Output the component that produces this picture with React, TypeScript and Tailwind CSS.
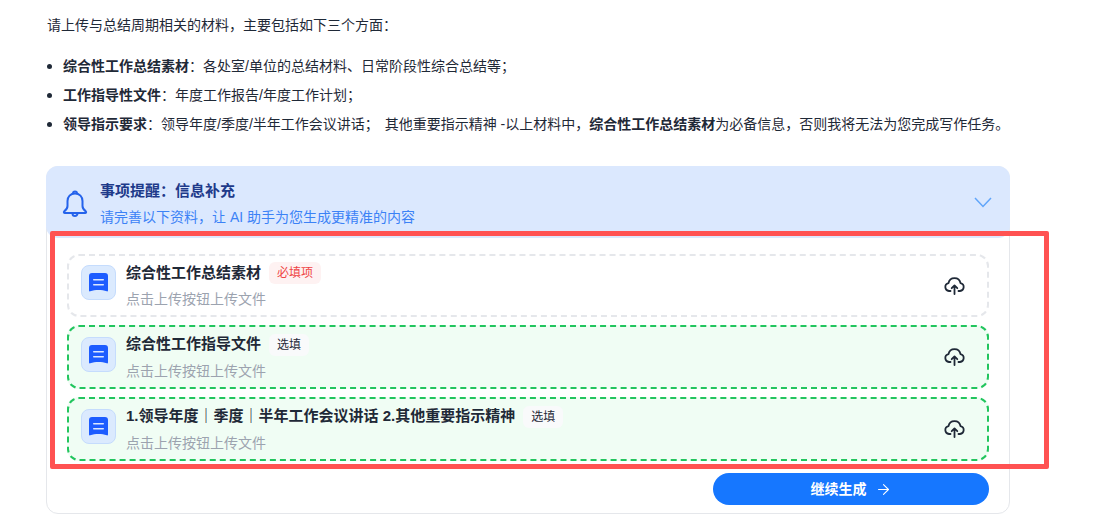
import { ArrowRight } from 'lucide-react'

const FONT = "font-['Liberation_Sans','Noto_Sans_CJK_SC',sans-serif]"

const BellIcon = () => (
  <svg width="26" height="30" viewBox="0 0 26 30" fill="none" stroke="#2563eb" strokeWidth="2" strokeLinejoin="round" className="shrink-0">
    <path d="M13 4.500c-4.500 0-7.500 3.200-7.500 7.500v5c0 2.500-1.500 4-3.300 5.400-.7.600-.3 1.600.6 1.600h20.400c.9 0 1.300-1 .6-1.600-1.800-1.400-3.300-2.900-3.300-5.400v-5c0-4.300-3-7.500-7.500-7.500z" />
    <path d="M11 4.500a2 2 0 1 1 4 0" />
    <path d="M10.500 24.500a2.500 2.500 0 0 0 5 0" />
  </svg>
)

const Chevron = () => (
  <svg width="18" height="11" viewBox="0 0 18 11" fill="none" stroke="#60a5fa" strokeWidth="1.500" className="shrink-0 mb-[4px]">
    <path d="M1 1l8 8.500L17 1" />
  </svg>
)

const DocIcon = () => (
  <div className="flex items-center justify-center w-[35px] h-[35px] mb-[6px] rounded-lg bg-[#dbeafe] border border-[#c5dcfd] shrink-0">
    <svg width="19" height="19" viewBox="0 0 19 19">
      <path d="M3 0h13a3 3 0 0 1 3 3v14.500c0 .7-.6 1.100-1.200.8-2.500-.9-5.300-1.300-8.300-1.300s-5.800.4-8.300 1.300C.6 18.600 0 18.200 0 17.500V3a3 3 0 0 1 3-3z" fill="#1d5cff" />
      <rect x="4" y="6" width="11" height="1.500" rx="0.700" fill="#dbe7ff" />
      <rect x="4" y="11" width="11" height="1.500" rx="0.700" fill="#dbe7ff" />
    </svg>
  </div>
)

const CloudIcon = () => (
  <svg width="21" height="19" viewBox="0 0 21 19" fill="none" stroke="#1f2937" strokeWidth="1.800" strokeLinecap="round" strokeLinejoin="round" className="shrink-0 mb-[1px]">
    <path d="M6.500 15H5a4 4 0 0 1-.5-7.900 6.100 6.100 0 0 1 12 0A4 4 0 0 1 16 15h-1.500" />
    <path d="M10.500 18V9.500M7.700 12.200l2.800-2.800 2.800 2.800" />
  </svg>
)

type UploadRowProps = {
  title: string
  tag: string
  required?: boolean
  done?: boolean
  className?: string
}

const UploadRow = ({ title, tag, required, done, className }: UploadRowProps) => {
  return (
    <div
      className={`flex items-center pl-[12px] pr-[22px] rounded-xl border-2 border-dashed ${
        done ? 'border-[#22c55e] bg-[#f0fdf4]' : 'border-[#e5e7eb] bg-white'
      } ${className ?? ''}`}
    >
      <DocIcon />
      <div className="flex-1 ml-[10px] min-w-0">
        <div className="flex items-center h-[22px]">
          <span className="text-[15px] font-bold text-[#1f2937]">{title}</span>
          <span
            className={`ml-[8px] px-[8px] h-[22px] leading-[22px] rounded-md text-[12px] ${
              required ? 'bg-[#fef2f2] text-[#ef4444]' : 'bg-[#f9fafb] text-[#1f2937]'
            }`}
          >
            {tag}
          </span>
        </div>
        <div className="mt-[5px] text-[14px] leading-[20px] text-[#9ca3af]">点击上传按钮上传文件</div>
      </div>
      <CloudIcon />
    </div>
  )
}

export default function App() {
  return (
    <div className={`relative w-[1095px] h-[515px] overflow-hidden bg-white text-[#1f2937] ${FONT}`}>
      <div className="pl-[47px] pt-[15px] w-[1040px]">
        <p className="text-[14px] leading-[20px]">请上传与总结周期相关的材料，主要包括如下三个方面：</p>

        <ul className="mt-[17px] text-[14px] leading-[29px]">
          <li className="flex items-center">
            <span className="w-[5px] h-[5px] rounded-full bg-[#1f2937] mr-[11px]" />
            <span><b>综合性工作总结素材</b>：各处室/单位的总结材料、日常阶段性综合总结等；</span>
          </li>
          <li className="flex items-center">
            <span className="w-[5px] h-[5px] rounded-full bg-[#1f2937] mr-[11px]" />
            <span><b>工作指导性文件</b>：年度工作报告/年度工作计划；</span>
          </li>
          <li className="flex items-center">
            <span className="w-[5px] h-[5px] rounded-full bg-[#1f2937] mr-[11px]" />
            <span>
              <b>领导指示要求</b>：领导年度/季度/半年工作会议讲话；<span className="ml-[2px]"> 其他重要指示精神 -以上材料中，</span><b>综合性工作总结素材</b>为必备信息，否则我将无法为您完成写作任务。
            </span>
          </li>
        </ul>
      </div>

      <div className="mt-[27px] ml-[46px] w-[964px] h-[348px] rounded-xl border border-[#e5e7eb] bg-white">
        <div className="flex items-center h-[72px] -mt-px -mx-px pt-[4px] pl-[16px] pr-[18px] rounded-xl bg-[#dbe8fe]">
          <BellIcon />
          <div className="flex-1 ml-[12px]">
            <div className="text-[15px] leading-[20px] font-bold text-[#1e3a8a]">事项提醒：信息补充</div>
            <div className="mt-[6px] text-[14px] leading-[20px] text-[#3b82f6]">请完善以下资料，让 AI 助手为您生成更精准的内容</div>
          </div>
          <Chevron />
        </div>

        <div className="flex flex-col pt-[16px] px-[20px]">
          <UploadRow title="综合性工作总结素材" tag="必填项" required className="h-[63px]" />
          <UploadRow title="综合性工作指导文件" tag="选填" done className="h-[64px] mt-[8px]" />
          <UploadRow title="1.领导年度｜季度｜半年工作会议讲话 2.其他重要指示精神" tag="选填" done className="h-[64px] mt-[8px]" />
          <div className="flex justify-end mt-[12px]">
            <button className="flex items-center justify-center gap-[8px] w-[276px] h-[32px] rounded-full bg-[#1677ff] text-white text-[14px] font-bold">
              继续生成
              <ArrowRight size={17} strokeWidth={1.500} className="text-white" />
            </button>
          </div>
        </div>
      </div>

      {/* annotation frame drawn over the screenshot */}
      <div className="absolute left-[50px] top-[231px] w-[999px] h-[238px] border-[5px] border-[#ff5252] rounded-[2px] pointer-events-none" />
    </div>
  )
}
